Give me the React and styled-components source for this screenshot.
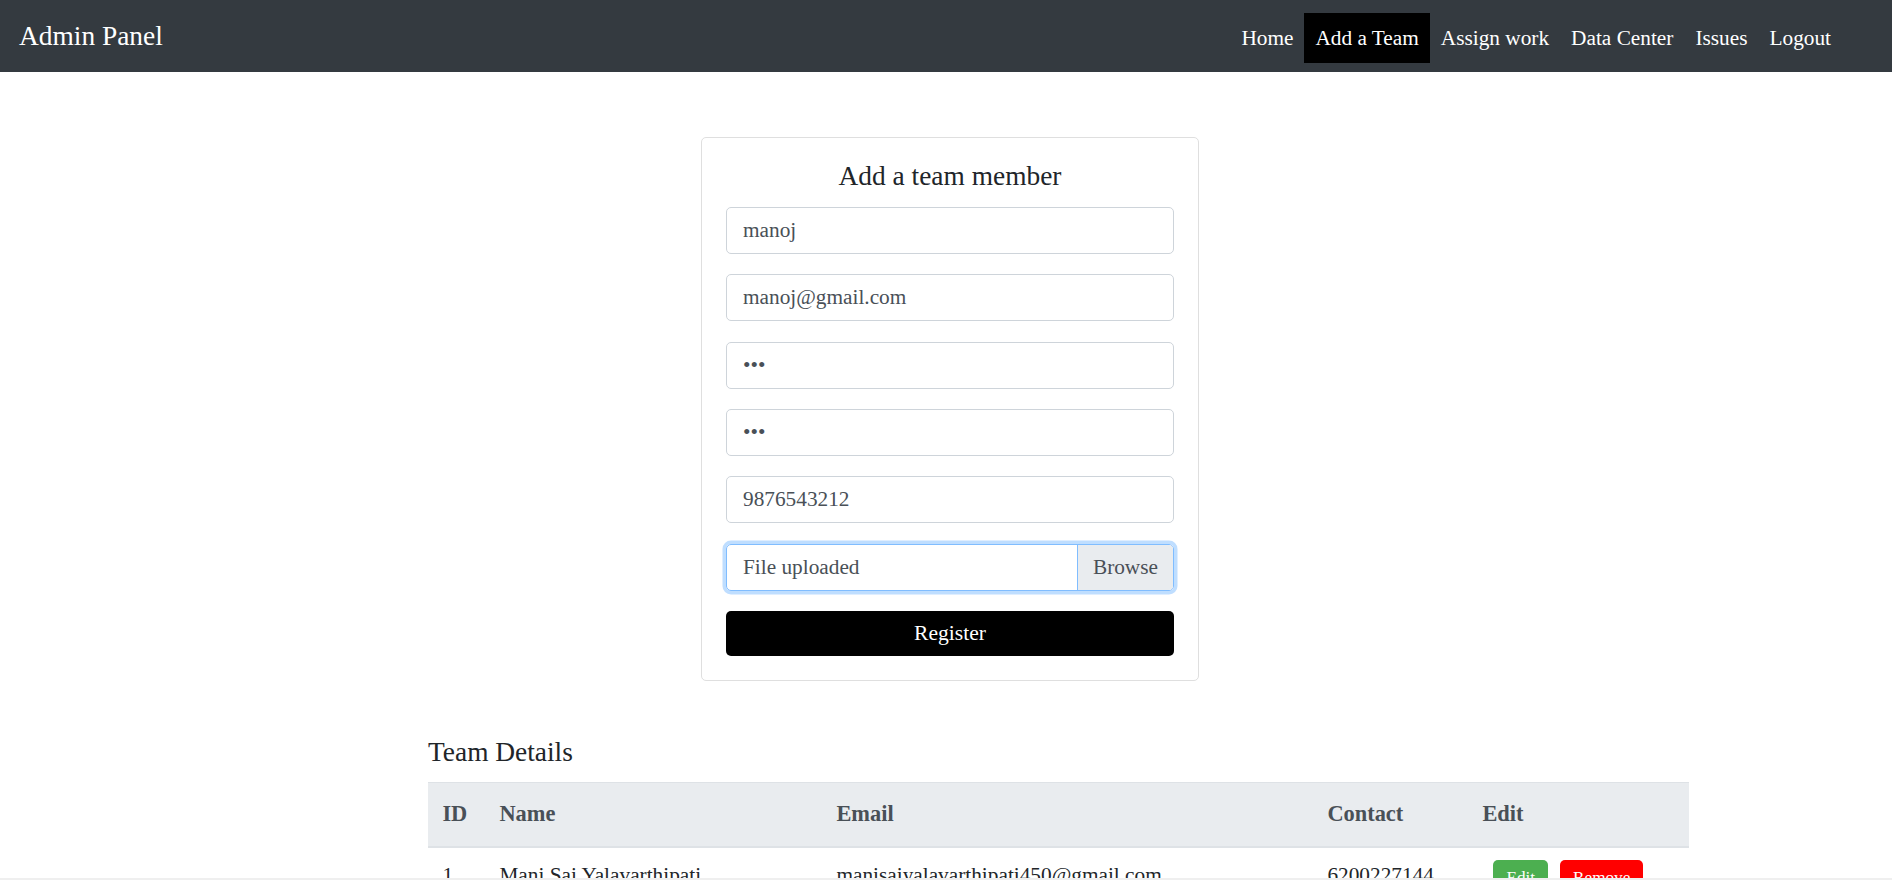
import React from 'react'
import styled, { createGlobalStyle } from 'styled-components'

const GlobalStyle = createGlobalStyle`
    body {
        margin: 0;
        background: #fff;
        font-family: "Liberation Serif", "Times New Roman", serif;
        color: #212529;
    }
    * {
        box-sizing: border-box;
    }
`

const navLinks = ['Home', 'Add a Team', 'Assign work', 'Data Center', 'Issues', 'Logout']

const team = [
    { id: 1, name: 'Mani Sai Yalavarthipati', email: 'manisaiyalavarthipati450@gmail.com', contact: '6200227144' },
]

const App = () => {
    return (
        <>
            <GlobalStyle/>
            <Navbar>
                <Brand>Admin Panel</Brand>
                <NavList>
                    {navLinks.map(link => (
                        <NavItem key={link} $active={link === 'Add a Team'}>{link}</NavItem>
                    ))}
                </NavList>
            </Navbar>

            <Card>
                <CardTitle>Add a team member</CardTitle>
                <Input type="text" defaultValue="manoj"/>
                <Input type="email" defaultValue="manoj@gmail.com"/>
                <Input type="password" defaultValue="abc"/>
                <Input type="password" defaultValue="abc"/>
                <Input type="text" defaultValue="9876543212"/>
                <FileField>
                    <FileLabel>File uploaded</FileLabel>
                    <BrowseButton>Browse</BrowseButton>
                </FileField>
                <RegisterButton>Register</RegisterButton>
            </Card>

            <TeamSection>
                <SectionTitle>Team Details</SectionTitle>
                <Table>
                    <colgroup>
                        <col style={{ width: 57 }}/>
                        <col style={{ width: 337 }}/>
                        <col style={{ width: 491 }}/>
                        <col style={{ width: 155 }}/>
                        <col/>
                    </colgroup>
                    <thead>
                        <tr>
                            <Th>ID</Th>
                            <Th>Name</Th>
                            <Th>Email</Th>
                            <Th>Contact</Th>
                            <Th>Edit</Th>
                        </tr>
                    </thead>
                    <tbody>
                        {team.map(member => (
                            <tr key={member.id}>
                                <Td>{member.id}</Td>
                                <Td>{member.name}</Td>
                                <Td>{member.email}</Td>
                                <Td>{member.contact}</Td>
                                <Td>
                                    <Actions>
                                        <SmallButton $color="#4caf50">Edit</SmallButton>
                                        <SmallButton $color="#ff0000">Remove</SmallButton>
                                    </Actions>
                                </Td>
                            </tr>
                        ))}
                    </tbody>
                </Table>
            </TeamSection>
            <ScrollEdge/>
        </>
    )
}


const Navbar = styled.nav`
    display: flex;
    align-items: center;
    justify-content: space-between;
    height: 72px;
    padding: 0 50px 0 19px;
    background: #343a40;
`

const Brand = styled.div`
    font-size: 27.4px;
    line-height: 1;
    color: #fff;
    margin-top: 2px;
`

const NavList = styled.div`
    display: flex;
    margin-top: 4px;
`

const NavItem = styled.div`
    height: 50px;
    line-height: 50px;
    padding: 0 11px;
    font-size: 21.3px;
    color: #fff;
    background: ${props => props.$active ? '#000' : 'transparent'};
    cursor: pointer;
`

const Card = styled.div`
    width: 498px;
    margin: 65px 0 0 calc(50% - 245px);
    padding: 22px 24px 24px;
    border: 1px solid #dfdfdf;
    border-radius: 5px;
`

const CardTitle = styled.h4`
    margin: 0 0 14px;
    font-size: 27.4px;
    font-weight: 400;
    line-height: 1.2;
    text-align: center;
    color: #212529;
`

const Input = styled.input`
    display: block;
    width: 100%;
    height: 47px;
    margin: 0 0 20.4px;
    padding: 0 16px;
    border: 1px solid #ced4da;
    border-radius: 5px;
    font-family: inherit;
    font-size: 21.3px;
    color: #495057;
    outline: none;
`

const FileField = styled.div`
    display: flex;
    height: 47px;
    margin-bottom: 20.4px;
    border: 1px solid #80bdff;
    border-radius: 5px;
    box-shadow: 0 0 0 3.5px rgba(0, 123, 255, 0.25);
    overflow: hidden;
    font-size: 21.3px;
    color: #495057;
`

const FileLabel = styled.div`
    flex: 1;
    display: flex;
    align-items: center;
    padding: 0 16px;
`

const BrowseButton = styled.div`
    display: flex;
    align-items: center;
    padding: 0 15px;
    background: #e9ecef;
    border-left: 1px solid #80bdff;
`

const RegisterButton = styled.button`
    display: block;
    width: 100%;
    height: 45px;
    border: none;
    border-radius: 5px;
    background: #000;
    color: #fff;
    font-family: inherit;
    font-size: 21.6px;
    cursor: pointer;
`

const TeamSection = styled.section`
    width: 1261px;
    margin: 55px 0 0 428px;
`

const SectionTitle = styled.h4`
    margin: 0 0 13px;
    font-size: 27.4px;
    font-weight: 400;
    line-height: 1.2;
    color: #212529;
`

const Table = styled.table`
    width: 100%;
    border-collapse: collapse;
    table-layout: fixed;
`

const Th = styled.th`
    height: 64px;
    padding: 0 14.4px;
    text-align: left;
    vertical-align: middle;
    font-size: 22.4px;
    font-weight: 700;
    color: #495057;
    background: #e9ecef;
    border-top: 1px solid #dee2e6;
    border-bottom: 2px solid #dee2e6;
`

const Td = styled.td`
    padding: 12px 14.4px;
    vertical-align: top;
    font-size: 21.3px;
    line-height: 1.5;
    color: #212529;
    white-space: nowrap;
`

const Actions = styled.div`
    display: flex;
    gap: 12px;
    margin-left: 11px;
`

const SmallButton = styled.button`
    padding: 5px 13px;
    border: none;
    border-radius: 5px;
    background: ${props => props.$color};
    color: #fff;
    font-family: inherit;
    font-size: 17.2px;
    line-height: 1.5;
    cursor: pointer;
`

const ScrollEdge = styled.div`
    position: fixed;
    left: 0;
    right: 0;
    bottom: 0;
    height: 2px;
    background: #efefef;
`

export default App
